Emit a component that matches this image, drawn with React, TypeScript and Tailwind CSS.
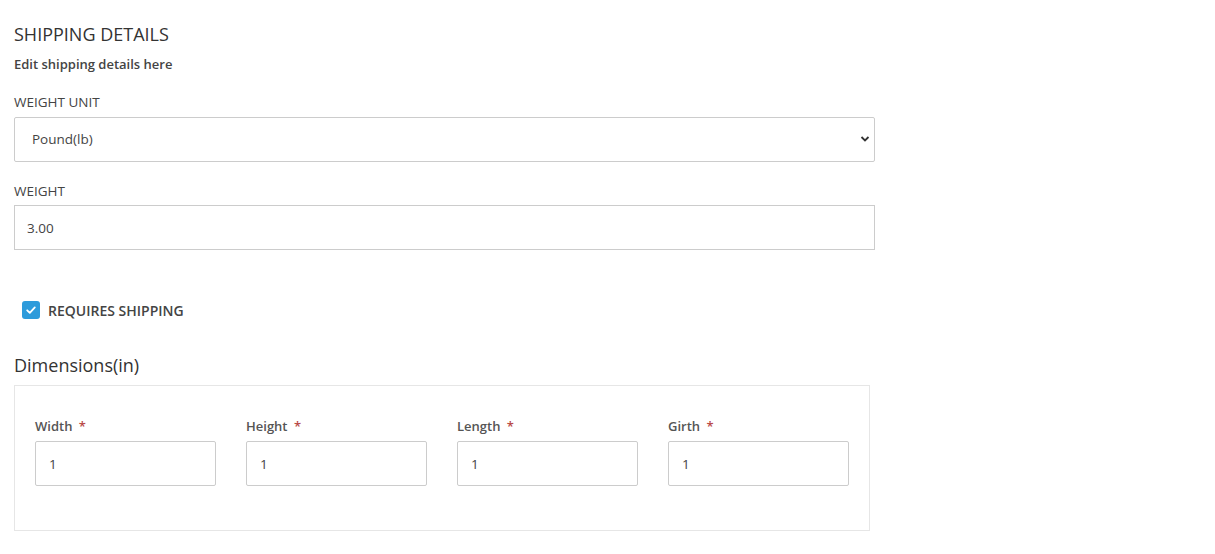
const dims = ['Width', 'Height', 'Length', 'Girth']

export default function App() {
  return (
    <div className="min-h-screen bg-white px-[14px] pt-[22px] text-[#333]" style={{ fontFamily: '"Open Sans", sans-serif' }}>
      <h1 className="text-[18px] leading-6 font-normal text-[#333]">SHIPPING DETAILS</h1>
      <p className="mt-2 text-[13px] leading-5 font-semibold text-[#444]">Edit shipping details here</p>

      <label className="mt-[18px] block text-[13.5px] leading-5 text-[#444]">WEIGHT UNIT</label>
      <div className="relative mt-[5px] w-[861px]">
        <select
          defaultValue="lb"
          className="h-[45px] w-full appearance-none rounded-[2px] border border-[#cccccc] bg-white pl-[17px] text-[13.5px] text-[#444] outline-none"
        >
          <option value="lb">Pound(lb)</option>
          <option value="kg">Kilogram(kg)</option>
        </select>
        <svg className="pointer-events-none absolute right-[5px] top-[17px]" width="10" height="10" viewBox="0 0 10 10">
          <path d="M1.5 3 L5 6.5 L8.5 3" fill="none" stroke="#333" strokeWidth="1.8" />
        </svg>
      </div>

      <label className="mt-[19px] block text-[13.5px] leading-5 text-[#444]">WEIGHT</label>
      <input
        defaultValue="3.00"
        className="mt-1 block h-[45px] w-[861px] border border-[#cccccc] px-3 text-[13.5px] text-[#444] outline-none"
      />

      <div className="mt-[50px] flex h-5 items-center gap-[8px] pl-[8px]">
        <span className="flex h-[18px] w-[18px] items-center justify-center rounded-[3px] bg-[#2d9bdb]">
          <svg width="12" height="12" viewBox="0 0 12 12">
            <path d="M2.2 6.3 L4.8 8.8 L9.8 3.4" fill="none" stroke="white" strokeWidth="1.8" strokeLinecap="round" strokeLinejoin="round" />
          </svg>
        </span>
        <span className="text-[14px] font-semibold text-[#444]">REQUIRES SHIPPING</span>
      </div>

      <h2 className="mt-[33px] text-[18px] leading-6 text-[#333]">Dimensions(in)</h2>
      <div className="mt-2 w-[856px] border border-[#e6e6e6] px-5 pt-[30px] pb-[44px]">
        <div className="flex gap-[30px]">
          {dims.map(d => (
            <div key={d} className="w-[181px]">
              <label className="block text-[13px] leading-5 font-semibold text-[#555]">
                {d} <span className="ml-[3px] text-[#b94a48]">*</span>
              </label>
              <input
                defaultValue="1"
                className="mt-[5px] block h-[45px] w-[181px] rounded-[2px] border border-[#cccccc] px-[13px] text-[13.5px] text-[#444] outline-none"
              />
            </div>
          ))}
        </div>
      </div>
    </div>
  )
}
